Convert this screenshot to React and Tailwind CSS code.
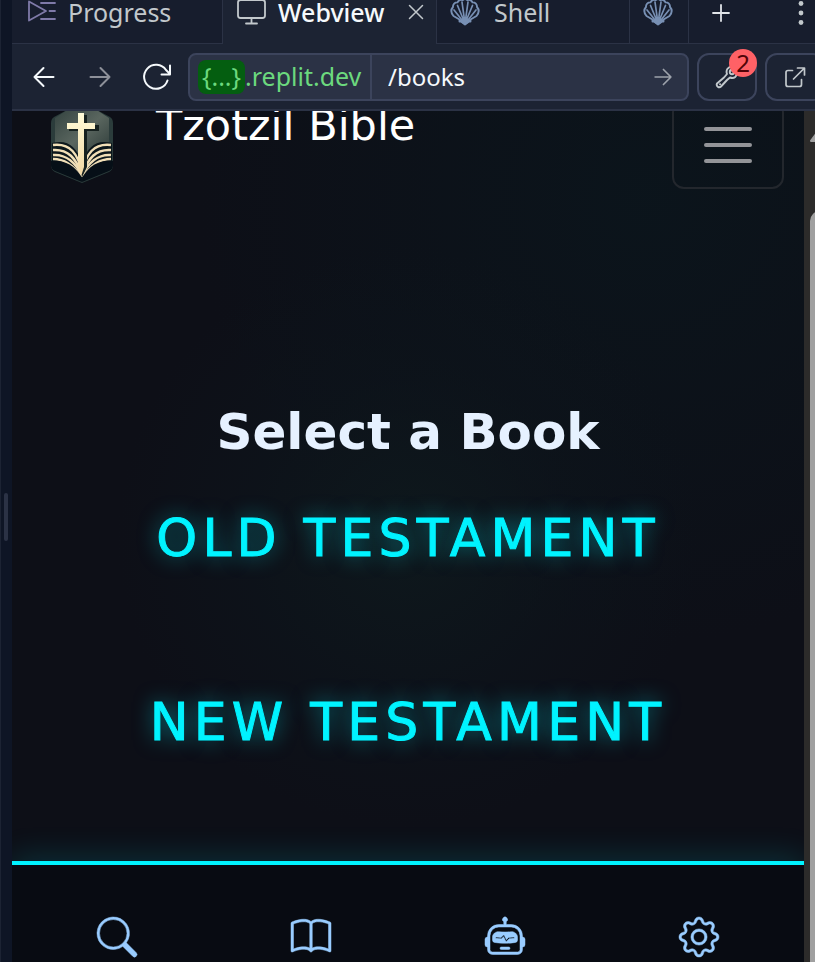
import React from "react";
import { BsSearch, BsBook, BsRobot, BsGear } from "react-icons/bs";

const stroke = {
  fill: "none",
  stroke: "currentColor",
  strokeLinecap: "round",
  strokeLinejoin: "round",
};

function ConsoleIcon() {
  return (
    <svg className="h-6 w-[30px] shrink-0 overflow-visible text-[#7f7aa8]" viewBox="0 3 30 24" {...stroke} strokeWidth="1.8">
      <path d="M3 4.500 20 14 3 23.500z" />
      <path d="M15 6h14M23.500 14H29M15 22h14" />
    </svg>
  );
}

function MonitorIcon() {
  return (
    <svg className="h-6 w-[30px] shrink-0 overflow-visible text-[#c2c8cc]" viewBox="0 3 30 24" {...stroke} strokeWidth="1.8">
      <rect x="2" y="3" width="27" height="18" rx="2.500" />
      <path d="M15.500 21V26M10 26.500h11" />
    </svg>
  );
}

function ShellIcon() {
  return (
    <svg className="h-6 w-[30px] shrink-0 overflow-visible text-[#7890b4]" viewBox="0 3 30 24" {...stroke} strokeWidth="1.900">
      <path d="M15 27.500 11 24.500H9.500V22.500L3.500 19C1 16 .8 12.500 3 10c-.2-2.800 1.800-4.800 4.500-4.600C8.500 3 11 2.300 12.500 3.200 14 1.800 16 1.800 17.500 3.200 19 2.300 21.500 3 22.500 5.400c2.700-.2 4.700 1.800 4.500 4.600 2.200 2.500 2 6-.5 9l-6 3.500v2H19z" />
      <path d="M14 24 7.500 8.500M14.500 23 12 5M15.500 23 18 5M16 24 22.500 8.500M12 23 4 13M18 23 26 13" strokeWidth="1.700" />
      <path d="M10 23.500 15 27l5-3.500-5-1.500z" fill="currentColor" />
    </svg>
  );
}

function ArrowIcon({ back, small }) {
  return (
    <svg className={small ? "h-5 w-5" : "h-6 w-6"} viewBox="0 0 24 24" {...stroke} strokeWidth="2">
      <path d={back ? "M21.500 12H2.500M11.500 3 2.500 12l9 9" : "M2.500 12h19M12.500 3 21.500 12l-9 9"} />
    </svg>
  );
}

function ReloadIcon() {
  return (
    <svg className="h-[30px] w-[30px]" viewBox="0 0 30 30" {...stroke} strokeWidth="2">
      <path d="M25.500 18.500A12 12 0 1 1 24 8L28 12M28 3.500v9H19.500" />
    </svg>
  );
}

function WrenchIcon() {
  return (
    <svg className="h-6 w-6" viewBox="0 0 24 24" {...stroke} strokeWidth="1.900">
      <path d="M12 9C10.500 5 13 1.500 17.500 1.500L16.500 5l2.500 2.500 3.500-1c0 5-3.500 7.500-7.500 6l-3 2.500-6 6.500C4 23.500 .8 21 2 18.500l7-6z" />
      <path d="M5 19.300h.1" />
      <circle cx="17" cy="7" r="2.200" />
    </svg>
  );
}

function ExternalIcon() {
  return (
    <svg className="h-[22px] w-[22px] shrink-0" viewBox="0 0 22 22" {...stroke} strokeWidth="1.700">
      <path d="M8.500 4.500H4a2 2 0 0 0-2 2V18.500a2 2 0 0 0 2 2H15.500a2 2 0 0 0 2-2V13.500M13.500 2h7v7M20 2.500 9.500 13" />
    </svg>
  );
}

const leftPages = ["M33 66C28 44 20 34 3 36", "M32 66C26 49 18 40 3 41", "M32 67C26 54 16 45 3 46", "M31 68C24 57 15 50 3 50"];

function LogoIcon() {
  return (
    <svg className="h-[74px] w-[64px] shrink-0" viewBox="0 0 64 74" role="img" aria-label="Tzotzil Bible logo">
      <defs>
        <linearGradient id="cover" x1="0" y1="0" x2="1" y2="1">
          <stop offset="0" stopColor="#33423f" />
          <stop offset="0.5" stopColor="#5a665f" />
          <stop offset="1" stopColor="#2a3836" />
        </linearGradient>
        <linearGradient id="cross" x1="0" y1="0" x2="0" y2="1">
          <stop offset="0" stopColor="#fffbd8" />
          <stop offset="1" stopColor="#f3d9a4" />
        </linearGradient>
      </defs>
      <path d="M19 0H45L60 8Q63 10 63 14V56Q63 61 59 63L32 74 5 63Q1 61 1 56V14Q1 10 4 8z" fill="#2b3c3b" />
      <path d="M19 0H45L59 9V42L32 50 5 42V9z" fill="url(#cover)" />
      <path d="M2 34Q24 28 32 54 40 28 62 34V60L32 72 2 60z" fill="#0c171c" />
      <g fill="none" stroke="#f1dfb7" strokeWidth="2.500">
        {leftPages.map((d) => (
          <path key={d} d={d} />
        ))}
        <g transform="matrix(-1 0 0 1 64 0)">
          {leftPages.map((d) => (
            <path key={d} d={d} />
          ))}
        </g>
      </g>
      <path d="M1 52Q20 50 31 67L32 73 5 62Q1 60 1 56z" fill="#060f17" />
      <path d="M63 52Q44 50 33 67L32 73 59 62Q63 60 63 56z" fill="#060f17" />
      <path d="M30 6h7v10h12v6H37V58L32 68 30 58V22H19v-6h11z" fill="#16211f" />
      <path d="M28 4h6v10h11v6H34V58L31.500 66 28 58V20H17v-6h11z" fill="url(#cross)" />
    </svg>
  );
}

function Tab({ icon, label, active, className }) {
  return (
    <button
      type="button"
      role="tab"
      aria-selected={!!active}
      className={`flex shrink-0 items-start border-r border-[#2b3245] text-left ${
        active ? "bg-[#1c2333] text-[#f5f9fc]" : "border-b bg-[#171d2d] text-[#c2c8cc]"
      } ${className}`}
    >
      {icon}
      {label}
    </button>
  );
}

function TabBar() {
  return (
    <div role="tablist" className="flex h-11 shrink-0 bg-[#171d2d] text-[25px] leading-[24px]">
      <Tab className="w-[211px] gap-3 pl-[14px]" icon={<ConsoleIcon />} label="Progress" />
      <Tab
        active
        className="w-[214px] gap-3 pl-[13px] font-medium"
        icon={<MonitorIcon />}
        label={
          <>
            <span className="grow">Webview</span>
            <svg className="mr-3 mt-1 h-4 w-4 shrink-0 text-[#c2c8cc]" viewBox="0 0 16 16" {...stroke} strokeWidth="1.500">
              <path d="m1.500 1.500 13 13M14.500 1.500l-13 13" />
            </svg>
          </>
        }
      />
      <Tab className="w-[193px] gap-[14px] pl-[13px]" icon={<ShellIcon />} label="Shell" />
      <Tab className="w-[59px] pl-[13px]" icon={<ShellIcon />} />
      <div className="flex grow items-center justify-between border-b border-[#2b3245] pb-[17px] pl-[23px] pr-[9px] text-[#e0e4e8]">
        <button type="button" aria-label="New tab">
          <svg className="h-[18px] w-[18px]" viewBox="0 0 18 18" {...stroke} strokeWidth="1.800">
            <path d="M9 1v16M1 9h16" />
          </svg>
        </button>
        <button type="button" aria-label="More" className="text-[#c2c8cc]">
          <svg className="h-6 w-[10px]" viewBox="0 0 10 24" fill="currentColor">
            <circle cx="5" cy="2.500" r="2.400" />
            <circle cx="5" cy="12" r="2.400" />
            <circle cx="5" cy="21.500" r="2.400" />
          </svg>
        </button>
      </div>
    </div>
  );
}

function Toolbar() {
  return (
    <div className="flex h-[67px] shrink-0 items-center overflow-hidden border-b-2 border-[#2b3245] bg-[#1c2333] pl-5 text-[24px] text-[#f5f9fc]">
      <div className="flex shrink-0 items-center gap-8">
        <button type="button" aria-label="Back"><ArrowIcon back /></button>
        <button type="button" aria-label="Forward" className="text-[#8d9099]"><ArrowIcon /></button>
        <button type="button" aria-label="Reload" className="-ml-[2px]"><ReloadIcon /></button>
      </div>
      <div className="ml-4 flex h-12 min-w-0 grow overflow-hidden rounded-lg border-2 border-[#3c445c] bg-[#2b3245]">
        <div className="flex w-[182px] shrink-0 items-center border-r-2 border-[#3c445c] pl-2 text-[25px] text-[#6cd97e]">
          <span className="flex h-[34px] w-[47px] items-center justify-center rounded-lg bg-[#045e10]">{"{...}"}</span>
          <span>.replit.dev</span>
        </div>
        <input aria-label="Path" defaultValue="/books" className="min-w-0 grow bg-transparent pl-4 outline-none" />
        <button type="button" aria-label="Go" className="px-[14px] text-[#9da2ab]"><ArrowIcon small /></button>
      </div>
      <button
        type="button"
        aria-label="Developer tools, 2 messages"
        className="relative ml-2 flex h-12 w-[60px] shrink-0 items-center justify-center rounded-xl border-2 border-[#3c445c] text-[#c2c8cc]"
      >
        <WrenchIcon />
        <span className="absolute -right-[2px] -top-[6px] flex h-7 w-7 items-center justify-center rounded-full bg-[#ff6166] text-[#520307]">2</span>
      </button>
      <button
        type="button"
        aria-label="Open in new tab"
        className="-mr-[10px] ml-2 flex h-12 w-[60px] shrink-0 items-center justify-center rounded-xl border-2 border-[#3c445c] text-[#c2c8cc]"
      >
        <ExternalIcon />
      </button>
    </div>
  );
}

function SiteHeader() {
  return (
    <header className="-mt-[10px] flex h-[88px] shrink-0 items-start pl-[38px] pr-5">
      <a href="#home" className="flex items-start gap-[42px] text-white">
        <span className="pt-2"><LogoIcon /></span>
        <span className="text-[43px] leading-[48px]">Tzotzil Bible</span>
      </a>
      <button
        type="button"
        aria-label="Menu"
        className="ml-auto flex h-[88px] w-[112px] flex-col items-center justify-center gap-3 rounded-xl border-2 border-[#23272d]"
      >
        <span className="h-1 w-12 rounded-full bg-[#939498]" />
        <span className="h-1 w-12 rounded-full bg-[#939498]" />
        <span className="h-1 w-12 rounded-full bg-[#939498]" />
      </button>
    </header>
  );
}

const testament =
  "text-[52px] leading-[60px] tracking-widest whitespace-nowrap text-[#00f3ff] [-webkit-text-stroke:1px_#00f3ff] [text-shadow:0_0_20px_rgba(0,243,255,0.5)]";

const navItems = [
  { label: "Search", Icon: BsSearch },
  { label: "Books", Icon: BsBook },
  { label: "Assistant", Icon: BsRobot },
  { label: "Settings", Icon: BsGear },
];

function Site() {
  return (
    <div className="flex min-w-0 grow flex-col overflow-hidden bg-[#0d0f17] bg-[radial-gradient(circle_at_50%_50%,rgba(14,25,29,0.9)_0%,rgba(13,20,27,0.6)_28%,transparent_50%),radial-gradient(circle_at_80%_10%,rgba(11,21,28,0.9)_0%,transparent_45%)] font-['DejaVu_Sans',sans-serif]">
      <SiteHeader />
      <main className="flex grow flex-col items-center pt-[213px]">
        <h1 className="text-[50px] font-bold leading-[60px] text-[#e6f1ff]">Select a Book</h1>
        <h2 className={`mt-[46px] ${testament}`}>OLD TESTAMENT</h2>
        <h2 className={`mt-[124px] ${testament}`}>NEW TESTAMENT</h2>
      </main>
      <nav className="flex h-[101px] shrink-0 justify-around border-t-4 border-[#00f3ff] bg-[#080b12] px-2 pt-[52px] text-[#99ccff] shadow-[0_-4px_30px_rgba(0,243,255,0.15)]">
        {navItems.map(({ label, Icon }) => (
          <a key={label} href={`#${label.toLowerCase()}`} aria-label={label}>
            <Icon className="h-10 w-10 overflow-visible" stroke="currentColor" strokeWidth="0.2" />
          </a>
        ))}
      </nav>
    </div>
  );
}

function ScrollTrack() {
  return (
    <div className="flex w-[11px] shrink-0 flex-col overflow-hidden bg-[#2c2b2a] pl-[6px] text-[#a0a0a0]">
      <div className="h-[100px] pt-5">
        <svg className="h-[11px] w-[14px]" viewBox="0 0 14 11" fill="currentColor">
          <path d="M6 1.500Q7 0 8 1.500L14 10Q14 11 13 11H1Q0 11 0 9.500z" />
        </svg>
      </div>
      <div className="w-5 grow rounded-t-full bg-[#a0a0a0]" />
    </div>
  );
}

export default function App() {
  return (
    <div className="flex h-screen w-full overflow-hidden bg-[#0e1525] font-['Noto_Sans',sans-serif]">
      <div className="flex w-3 shrink-0 items-center border-l border-[#1c2333] pl-[3px] pt-[72px]">
        <div className="h-12 w-1 rounded-full bg-[#2b3245]" />
      </div>
      <div className="flex min-w-0 grow flex-col">
        <TabBar />
        <Toolbar />
        <div className="flex min-h-0 grow overflow-hidden">
          <Site />
          <ScrollTrack />
        </div>
      </div>
    </div>
  );
}
